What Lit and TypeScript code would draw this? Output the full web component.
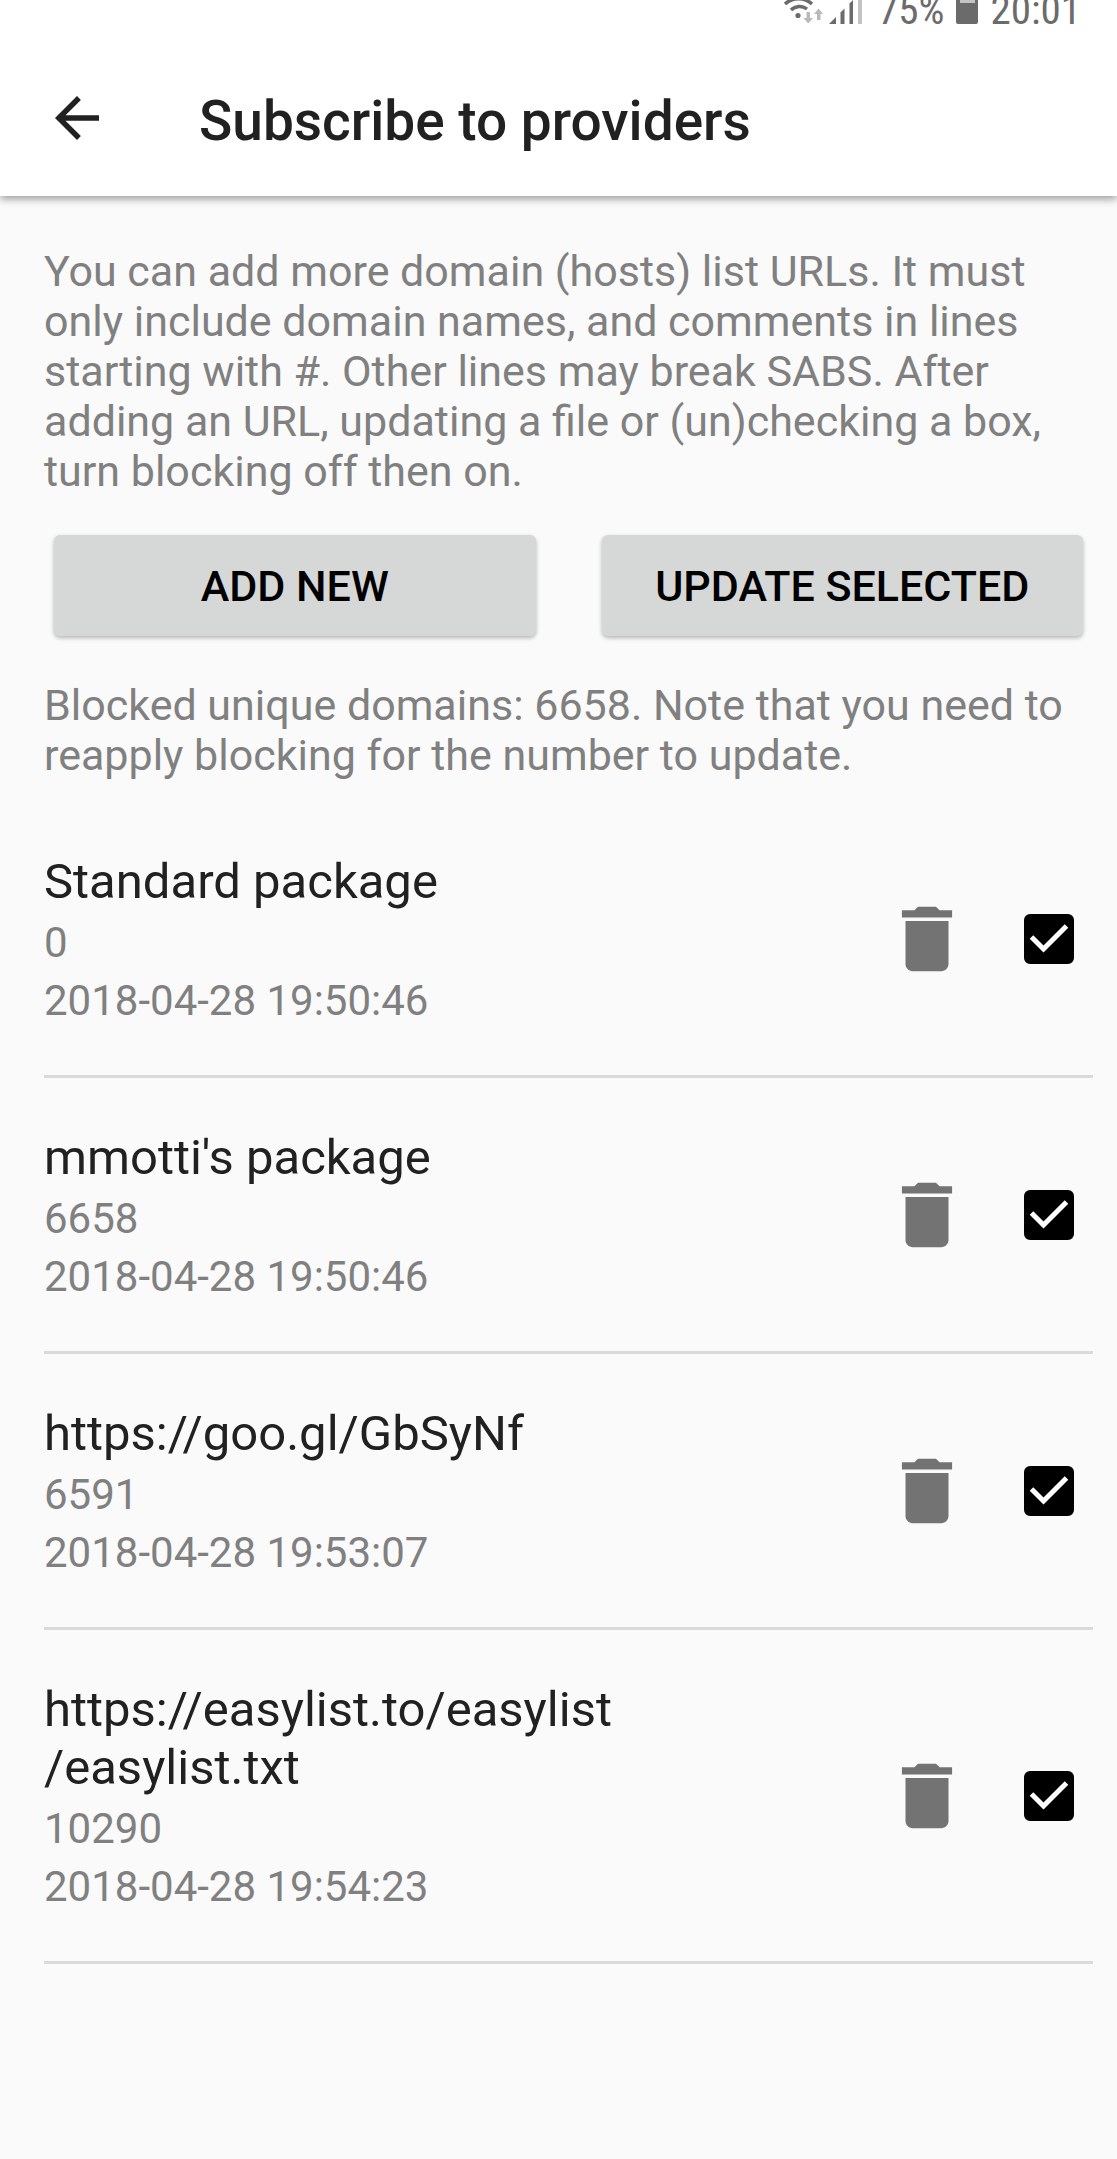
import { LitElement, html, css, svg } from "lit";
import { customElement, state } from "lit/decorators.js";

interface Provider {
  id: string;
  /** Name split at the places where it may wrap. */
  name: string[];
  count: number;
  updated: string;
  selected: boolean;
}

const wifiIcon = svg`
  <path d="M1 -3a27 27 0 0 1 38 0" stroke="#6b6b6b" stroke-width="4" fill="none"/>
  <path d="M6 4a20 20 0 0 1 27 0" stroke="#6b6b6b" stroke-width="3.5" fill="none"/>
  <path d="M12 10a12 12 0 0 1 16 -1" stroke="#6b6b6b" stroke-width="3.5" fill="none"/>
  <circle cx="19" cy="15.500" r="2.600" fill="#6b6b6b"/>
  <path d="M27.500 12h3.500v6h3l-4.800 5.500l-4.800 -5.500h3.100z" fill="#b9b9b9"/>
  <path d="M38 20h3.500v-6h2.500l-4.400 -5.500l-4.600 5.500h3z" fill="#b9b9b9"/>`;

const signalIcon = svg`
  <path d="M0 24L7 17V24z" fill="#6b6b6b"/>
  <path d="M11.500 12.500L15.500 8.500V24h-4z" fill="#6b6b6b"/>
  <path d="M20.500 3.500L24 0V24h-3.500z" fill="#6b6b6b"/>
  <path d="M29 0h4v24h-4z" fill="#c4c4c4"/>`;

@customElement("app-root")
export class AppRoot extends LitElement {
  @state() private providers: Provider[] = [
    { id: "standard", name: ["Standard package"], count: 0, updated: "2018-04-28 19:50:46", selected: true },
    { id: "mmotti", name: ["mmotti's package"], count: 6658, updated: "2018-04-28 19:50:46", selected: true },
    { id: "goo", name: ["https://goo.gl/GbSyNf"], count: 6591, updated: "2018-04-28 19:53:07", selected: true },
    { id: "easylist", name: ["https://easylist.to/easylist", "/easylist.txt"], count: 10290, updated: "2018-04-28 19:54:23", selected: true },
  ];

  static styles = css`
    :host {
      display: block;
      min-height: 100vh;
      background: #fafafa;
      color: #212121;
      font-family: Roboto, "Liberation Sans", sans-serif;
      font-size: 43px;
    }
    * { box-sizing: border-box; }
    button { font: inherit; border: 0; cursor: pointer; }

    .top {
      background: #fff;
      box-shadow: 0 3px 8px rgba(0, 0, 0, 0.38);
    }
    .status {
      display: flex;
      justify-content: flex-end;
      align-items: flex-start;
      height: 40px;
      padding-right: 36px;
      overflow: hidden;
      color: #6b6b6b;
      font-family: "Roboto Condensed", "Liberation Sans Narrow", Roboto, sans-serif;
      font-size: 41px;
    }
    .status span { line-height: 20px; }
    .wifi { width: 46px; height: 24px; margin-right: 4px; }
    .signal { width: 33px; height: 24px; margin-right: 16px; }
    .battery { width: 22px; height: 24px; margin: 0 12px; }

    .bar {
      display: flex;
      align-items: center;
      height: 156px;
      padding: 0 44px;
    }
    .back { display: block; padding: 0; background: none; color: #212121; }
    .back svg { display: block; width: 66px; height: 66px; }
    h1 {
      margin: 0 0 0 89px;
      padding-top: 6px;
      font-size: 55px;
      line-height: 64px;
      font-weight: 500;
    }

    main { padding: 50px 24px 0 44px; }
    p { margin: 0; line-height: 50px; color: #808080; }
    .actions {
      display: grid;
      grid-template-columns: 1fr 1fr;
      gap: 66px;
      padding: 39px 10px 44px;
    }
    .action {
      height: 101px;
      border-radius: 6px;
      background: #d6d8d7;
      color: #000;
      font-weight: 500;
      text-transform: uppercase;
      box-shadow: 0 2px 4px rgba(0, 0, 0, 0.28);
    }

    ul { list-style: none; margin: 22px 0 0; padding: 0; }
    li {
      display: flex;
      align-items: center;
      padding-right: 19px;
      border-bottom: 3px solid #dadada;
    }
    .info {
      flex: 1;
      min-width: 0;
      padding: 51px 60px 45px 0;
      font-size: 42px;
      line-height: 58px;
      color: #808080;
    }
    .name {
      display: block;
      margin-bottom: 3px;
      color: #212121;
      font-size: 49px;
    }
    .line { display: block; }
    .delete { display: block; padding: 0; background: none; color: #737373; }
    .delete svg { display: block; width: 86px; height: 86px; }
    .check { display: grid; margin-left: 54px; }
    .check > * { grid-area: 1 / 1; width: 50px; height: 50px; margin: 0; }
    .check input {
      appearance: none;
      border: 5px solid #737373;
      border-radius: 6px;
      cursor: pointer;
    }
    .check input:checked { border-color: #000; background: #000; }
    .check svg { pointer-events: none; visibility: hidden; }
    .check input:checked + svg { visibility: visible; }
  `;

  private toggle(id: string) {
    this.providers = this.providers.map((p) => (p.id === id ? { ...p, selected: !p.selected } : p));
  }

  private remove(id: string) {
    this.providers = this.providers.filter((p) => p.id !== id);
  }

  private renderProvider(p: Provider) {
    return html`
      <li>
        <div class="info">
          <label class="name" for=${p.id}>${p.name.map((part, i) => (i ? html`<wbr />${part}` : part))}</label>
          <span class="line">${p.count}</span>
          <time class="line">${p.updated}</time>
        </div>
        <button class="delete" aria-label="Delete" @click=${() => this.remove(p.id)}>
          <svg viewBox="0 0 24 24" fill="currentColor">
            <path d="M6 19c0 1.100.9 2 2 2h8c1.100 0 2-.9 2-2V7H6v12zM19 4h-3.500l-1-1h-5l-1 1H5v2h14V4z" />
          </svg>
        </button>
        <div class="check">
          <input type="checkbox" id=${p.id} .checked=${p.selected} @change=${() => this.toggle(p.id)} />
          <svg viewBox="0 0 50 50"><path d="M7.500 23l12 12L42.500 12" fill="none" stroke="#fff" stroke-width="5" /></svg>
        </div>
      </li>`;
  }

  render() {
    return html`
      <header class="top">
        <div class="status">
          <svg class="wifi" viewBox="0 0 46 24">${wifiIcon}</svg>
          <svg class="signal" viewBox="0 0 33 24">${signalIcon}</svg>
          <span>75%</span>
          <svg class="battery" viewBox="0 0 22 24">
            <path d="M0 0h22v22q0 2-2 2H2q-2 0-2-2z" fill="#6b6b6b" />
            <path d="M4 0h15v3H4z" fill="#c4c4c4" />
          </svg>
          <span>20:01</span>
        </div>
        <div class="bar">
          <button class="back" aria-label="Back">
            <svg viewBox="0 0 24 24" fill="currentColor">
              <path d="M20 11H7.830l5.590-5.590L12 4l-8 8 8 8 1.410-1.410L7.830 13H20v-2z" />
            </svg>
          </button>
          <h1>Subscribe to providers</h1>
        </div>
      </header>
      <main>
        <p>
          You can add more domain (hosts) list URLs. It must only include domain names, and comments in
          lines starting with #. Other lines may break SABS. After adding an URL, updating a file or
          (un)checking a box, turn blocking off then on.
        </p>
        <div class="actions">
          <button class="action">Add new</button>
          <button class="action">Update selected</button>
        </div>
        <p>Blocked unique domains: 6658. Note that you need to reapply blocking for the number to update.</p>
        <ul>
          ${this.providers.map((p) => this.renderProvider(p))}
        </ul>
      </main>
    `;
  }
}
